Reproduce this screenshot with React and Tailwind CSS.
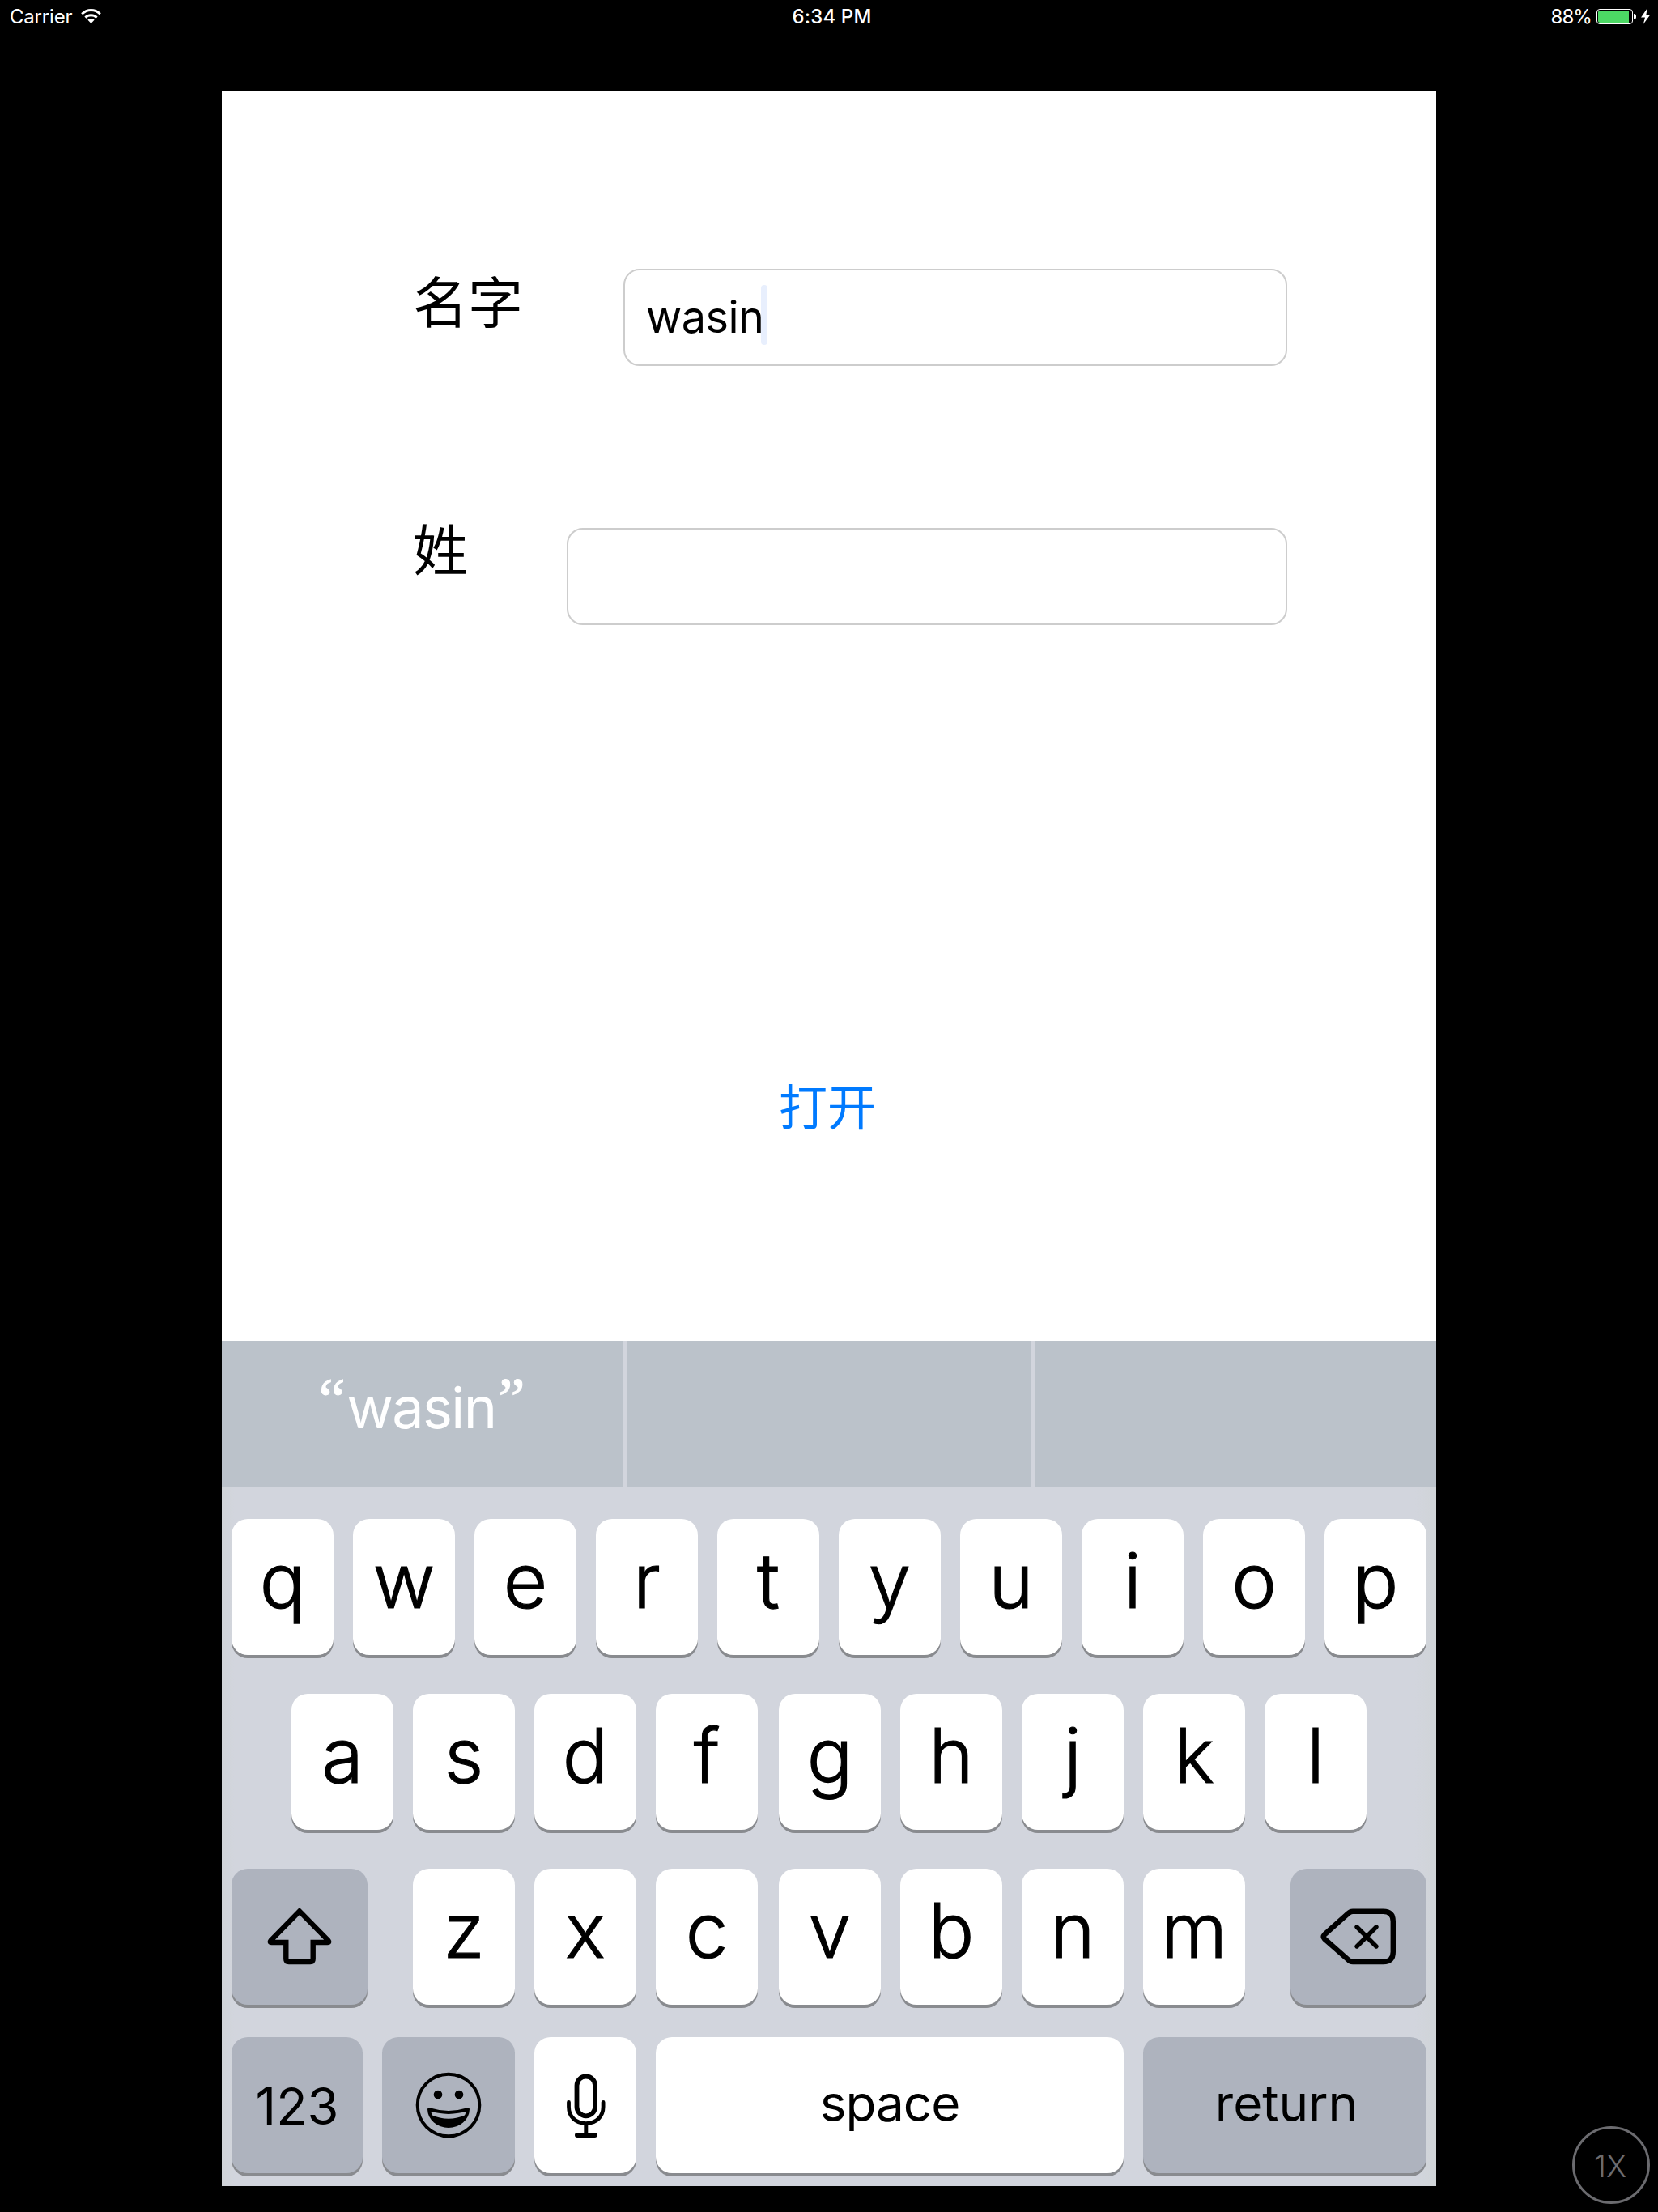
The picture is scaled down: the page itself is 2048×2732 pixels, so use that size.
import React from "react";

const latin = "font-['Inter','Liberation_Sans',sans-serif]";
const han = "font-['Noto_Sans_CJK_SC',sans-serif]";

function Key({ dark, className = "w-[126px]", children }) {
  return (
    <div
      className={`flex h-[168px] shrink-0 items-start justify-center rounded-[20px] text-black shadow-[0_4px_0_#898b8f] ${
        dark ? "bg-[#aeb3be]" : "bg-white"
      } ${className}`}
    >
      {children}
    </div>
  );
}

function Letter({ children }) {
  return (
    <Key>
      <span className="text-[94px] font-light leading-[153px] [-webkit-text-stroke:1.2px_#000]">{children}</span>
    </Key>
  );
}

function Quote({ children }) {
  return (
    <span className="-mt-px font-['Liberation_Serif',serif] text-[74px] leading-[147px] [-webkit-text-stroke:1px_#fff]">
      {children}
    </span>
  );
}

function ShiftIcon() {
  return (
    <svg width="168" height="168" viewBox="0 0 168 168" fill="none" stroke="#000" strokeWidth="6.4">
      <path
        strokeMiterlimit="10"
        d="M84 52.5 L48.6 88.6 Q46.6 91 49.5 91 H67.3 V111.5 Q67.3 115 70.8 115 H97.2 Q100.7 115 100.7 111.5 V91 H118.5 Q121.4 91 119.4 88.6 Z"
      />
    </svg>
  );
}

function DeleteIcon() {
  return (
    <svg width="168" height="168" viewBox="0 0 168 168" fill="none" stroke="#000" strokeWidth="6.4">
      <path
        strokeLinejoin="round"
        d="M77 52.7 H114.5 Q126.8 52.7 126.8 65 V102.7 Q126.8 115 114.5 115 H77 Q73.5 115 71 112.2 L41.8 86.5 Q39.6 84 41.8 81.5 L71 55.5 Q73.5 52.7 77 52.7 Z"
      />
      <path strokeWidth="5.4" strokeLinecap="round" d="M82 72 L106 96 M106 72 L82 96" />
    </svg>
  );
}

function EmojiIcon() {
  return (
    <svg width="164" height="168" viewBox="0 0 164 168" fill="none">
      <circle cx="82" cy="84" r="38.3" stroke="#000" strokeWidth="4" />
      <circle cx="69" cy="71" r="5.3" fill="#000" />
      <circle cx="95" cy="71" r="5.3" fill="#000" />
      <path
        stroke="#000"
        strokeWidth="4"
        strokeLinejoin="round"
        d="M58 89.2 Q82 96.6 106 89.2 C105.5 101 95 110 82 110 C69 110 58.5 101 58 89.2 Z"
      />
      <path fill="#000" d="M60.5 96 Q82 105.4 103.5 96 C100 106 92 111 82 111 C72 111 64 106 60.5 96 Z" />
    </svg>
  );
}

function MicIcon() {
  return (
    <svg width="126" height="168" viewBox="0 0 126 168" fill="none" stroke="#000" strokeLinecap="round">
      <rect x="52.5" y="48.5" width="22.6" height="48.8" rx="11.3" strokeWidth="5.8" />
      <path strokeWidth="4.8" d="M42.5 80.5 V86 C42.5 98 51 106.6 63.8 106.6 C76.6 106.6 85.1 98 85.1 86 V80.5" />
      <path strokeWidth="5" strokeLinecap="butt" d="M63.8 106 V120" />
      <path strokeWidth="6" d="M53 121 H74.6" />
    </svg>
  );
}

function StatusBar() {
  return (
    <div className="flex h-[112px] items-start text-[24px] leading-[41px] text-white">
      <div className="flex flex-1 items-start pl-[12px]">
        <span className="w-[88px] tracking-[-0.2px]">Carrier</span>
        <svg width="25" height="19" viewBox="0 0 25 19" className="mt-[11px]" fill="none" stroke="#fff">
          <path strokeWidth="3" d="M1.2 6.3 C7.5 0 17.5 0 23.8 6.3" />
          <path strokeWidth="3" d="M5.4 10.6 C9.5 6.8 15.5 6.8 19.6 10.6" />
          <path stroke="none" fill="#fff" d="M8.3 13.6 C10.6 11.5 14.4 11.5 16.7 13.6 L12.5 18 Z" />
        </svg>
      </div>
      <span className="ml-[4px] font-medium tracking-[0.15px]">6:34 PM</span>
      <div className="flex flex-1 items-start justify-end pr-[9px]">
        <span className="mr-[6px] tracking-[-0.9px]">88%</span>
        <div className="mt-[11px] flex h-[19px] w-[45px] rounded-[4px] border border-white p-px">
          <div className="w-[38px] rounded-l-[2px] bg-[#4cd964]" />
        </div>
        <div className="ml-px mt-[17px] h-[7px] w-[3px] rounded-r-[3px] bg-white" />
        <svg width="12" height="20" viewBox="0 0 12 20" className="ml-[6px] mt-[10px]">
          <path fill="#fff" d="M7.8 0 L0 11.5 H5 L2.8 20 L11.5 8 H6.4 Z" />
        </svg>
      </div>
    </div>
  );
}

export default function App() {
  return (
    <div className={`relative h-[2732px] w-[2048px] overflow-hidden bg-black ${latin}`}>
      <StatusBar />

      <main className="mx-auto flex h-[2588px] w-[1500px] flex-col bg-white">
        <section className="flex h-[1544px] flex-col pl-[236px] pr-[184px] pt-[220px]">
          <div className="flex h-[120px] items-start justify-between">
            <label className={`-mt-[2px] text-[68px] leading-[80px] text-black ${han}`}>名字</label>
            <div className="flex h-[120px] w-[820px] items-center rounded-[20px] border-2 border-[#cdcdcd] pl-[26px]">
              <span className="text-[54px] leading-[116px] tracking-[-0.5px] text-black">wasin</span>
              <span className="-ml-[4px] -mt-[6px] h-[74px] w-[8px] rounded-[4px] bg-[#e8effd]" />
            </div>
          </div>
          <div className="mt-[200px] flex h-[120px] items-start justify-between">
            <label className={`-mt-[16px] text-[68px] leading-[80px] text-black ${han}`}>姓</label>
            <div className="h-[120px] w-[890px] rounded-[20px] border-2 border-[#cdcdcd]" />
          </div>
          <button className={`ml-[452px] mt-[552px] w-[120px] whitespace-nowrap text-[60px] leading-[80px] text-[#007aff] ${han}`}>
            打开
          </button>
        </section>

        <section className="flex h-[180px] gap-[4px] bg-[#d2d5dd]">
          <div className="flex w-[496px] items-start justify-center bg-[#bbc2ca] pr-[2px] text-white">
            <Quote>“</Quote>
            <span className="ml-[2px] mr-[3px] text-[70px] leading-[165px] tracking-[-1.6px]">wasin</span>
            <Quote>”</Quote>
          </div>
          <div className="w-[500px] bg-[#bbc2ca]" />
          <div className="w-[496px] bg-[#bbc2ca]" />
        </section>

        <section className="flex h-[864px] flex-col bg-[linear-gradient(90deg,#d0d4d8_0px,#d2d5dd_16px,#d2d5dd_1474px,#d0d4d8_1500px)] px-[12px] pt-[40px]">
          <div className="flex gap-[24px]">
            {"qwertyuiop".split("").map((c) => (
              <Letter key={c}>{c}</Letter>
            ))}
          </div>
          <div className="mt-[48px] flex gap-[26px] pl-[74px]">
            <div className="flex gap-[24px]">
              {"asdf".split("").map((c) => (
                <Letter key={c}>{c}</Letter>
              ))}
            </div>
            <div className="flex gap-[24px]">
              {"ghjkl".split("").map((c) => (
                <Letter key={c}>{c}</Letter>
              ))}
            </div>
          </div>
          <div className="mt-[48px] flex justify-between">
            <Key dark className="w-[168px]">
              <ShiftIcon />
            </Key>
            <div className="flex gap-[26px]">
              <div className="flex gap-[24px]">
                {"zxc".split("").map((c) => (
                  <Letter key={c}>{c}</Letter>
                ))}
              </div>
              <div className="flex gap-[24px]">
                {"vbnm".split("").map((c) => (
                  <Letter key={c}>{c}</Letter>
                ))}
              </div>
            </div>
            <Key dark className="w-[168px]">
              <DeleteIcon />
            </Key>
          </div>
          <div className="mt-[40px] flex gap-[24px]">
            <Key dark className="w-[162px]">
              <span className="text-[63px] leading-[170px]">123</span>
            </Key>
            <Key dark className="w-[164px]">
              <EmojiIcon />
            </Key>
            <Key>
              <MicIcon />
            </Key>
            <Key className="w-[578px]">
              <span className="text-[62px] leading-[163px] tracking-[-1px]">space</span>
            </Key>
            <Key dark className="w-[350px]">
              <span className="ml-[4px] text-[62px] leading-[163px]">return</span>
            </Key>
          </div>
        </section>
      </main>

      <button className="absolute bottom-[10px] right-[10px] flex h-[96px] w-[96px] items-start justify-center rounded-full border-[3px] border-[#6b6b6f] pr-[2px] text-[38px] font-light leading-[92px] text-[#6b6b6f]">
        1X
      </button>
    </div>
  );
}
